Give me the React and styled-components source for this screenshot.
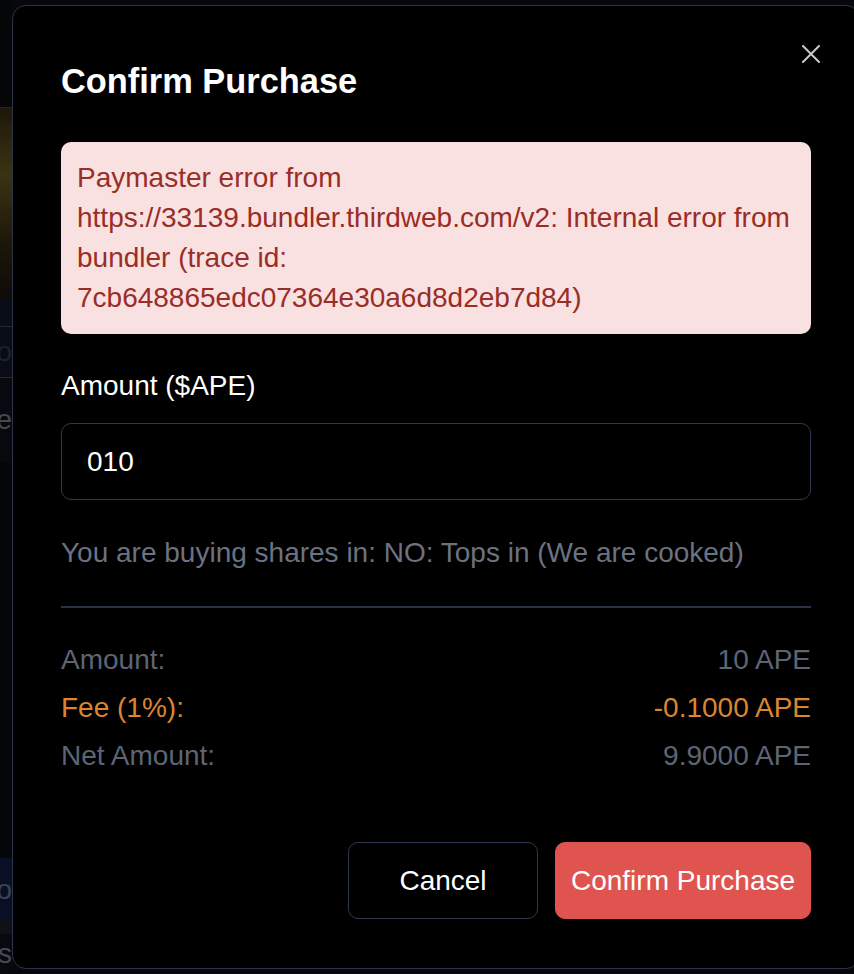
import styled, { createGlobalStyle } from 'styled-components';

const GlobalStyle = createGlobalStyle`
  html, body {
    margin: 0;
    padding: 0;
    background: #07080c;
    overflow: hidden;
  }
  body {
    font-family: "Liberation Sans", Arial, Helvetica, sans-serif;
  }
  * {
    box-sizing: border-box;
  }
`;

function CloseIcon() {
  return (
    <svg width="18" height="18" viewBox="0 0 18 18" fill="none">
      <path d="M1 1L17 17M17 1L1 17" stroke="currentColor" strokeWidth="2" strokeLinecap="round" />
    </svg>
  );
}

function App() {
  return (
    <>
      <GlobalStyle />
      <Page>
        <MarketCard>
          <CardTop />
          <CardImage />
          <CardGap />
          <CardStat>o</CardStat>
          <CardLabel>e</CardLabel>
          <CardSpacer />
          <CardFooter>o</CardFooter>
          <CardBand />
          <CardLabel $small>s</CardLabel>
        </MarketCard>
      </Page>
      <Overlay>
        <Modal>
          <CloseButton aria-label="Close">
            <CloseIcon />
          </CloseButton>
          <Title>Confirm Purchase</Title>
          <ErrorBox>
            Paymaster error from https://33139.bundler.thirdweb.com/v2: Internal error from bundler (trace id:
            7cb648865edc07364e30a6d8d2eb7d84)
          </ErrorBox>
          <Label>Amount ($APE)</Label>
          <AmountInput defaultValue="010" />
          <Hint>You are buying shares in: NO: Tops in (We are cooked)</Hint>
          <Divider />
          <Summary>
            <SummaryRow>
              <span>Amount:</span>
              <span>10 APE</span>
            </SummaryRow>
            <SummaryRow $accent>
              <span>Fee (1%):</span>
              <span>-0.1000 APE</span>
            </SummaryRow>
            <SummaryRow>
              <span>Net Amount:</span>
              <span>9.9000 APE</span>
            </SummaryRow>
          </Summary>
          <Actions>
            <ActionButton $width="190px">Cancel</ActionButton>
            <ActionButton $primary $width="256px">
              Confirm Purchase
            </ActionButton>
          </Actions>
        </Modal>
      </Overlay>
    </>
  );
}

const Page = styled.div`
  height: 974px;
  display: flex;
  background: #07080c;
`;

const MarketCard = styled.div`
  width: 300px;
  margin-left: -288px;
  display: flex;
  flex-direction: column;
  color: #3a3f4b;
  font-size: 28px;
`;

const CardTop = styled.div`
  height: 108px;
  background: #050608;
  border-bottom: 1px solid #23262e;
`;

const CardImage = styled.div`
  height: 191px;
  background: radial-gradient(ellipse at 100% 35%, #3a3412 0%, #1c160a 40%, #0d0907 75%);
`;

const CardGap = styled.div`
  height: 27px;
  background: #0a0d17;
`;

const CardStat = styled.div`
  height: 52px;
  background: #090c16;
  border-top: 1px solid #262a34;
  border-bottom: 1px solid #262a34;
  text-align: right;
  color: #1d212a;
  line-height: 50px;
`;

const CardLabel = styled.div`
  text-align: right;
  line-height: ${props => (props.$small ? '40px' : '84px')};
  background: #07090f;
  color: #444955;
`;

const CardSpacer = styled.div`
  flex: 1;
  background: #05060a;
`;

const CardFooter = styled.div`
  height: 64px;
  background: #0a1024;
  text-align: right;
  line-height: 64px;
  color: #3c4256;
`;

const CardBand = styled.div`
  height: 12px;
  background: #0f1117;
`;

const Overlay = styled.div`
  position: fixed;
  inset: 0;
  padding: 5px 0 0 12px;
`;

const Modal = styled.div`
  position: relative;
  width: 848px;
  display: flex;
  flex-direction: column;
  padding: 48px 48px 49px;
  background: #000;
  border: 1px solid #2b3349;
  border-radius: 14px;
  color: #fff;
`;

const CloseButton = styled.button`
  position: absolute;
  top: 39px;
  right: 39px;
  padding: 0;
  border: none;
  background: none;
  color: #c9c9cc;
  display: flex;
  cursor: pointer;
`;

const Title = styled.h2`
  margin: 0 0 34px;
  font-size: 34.4px;
  font-weight: 700;
  line-height: 54px;
`;

const ErrorBox = styled.div`
  padding: 16px;
  margin-bottom: 32px;
  background: #f9e1e1;
  border-radius: 10px;
  color: #992d27;
  font-size: 28px;
  line-height: 40px;
`;

const Label = styled.label`
  margin-bottom: 17px;
  font-size: 28px;
  line-height: 40px;
`;

const AmountInput = styled.input`
  height: 77px;
  padding: 0 25px;
  margin-bottom: 33px;
  background: #000;
  border: 1px solid #2f3850;
  border-radius: 10px;
  color: #fff;
  font-family: inherit;
  font-size: 28px;
  outline: none;
`;

const Hint = styled.p`
  margin: 0 0 33px;
  color: #6b7280;
  font-size: 28px;
  line-height: 40px;
`;

const Divider = styled.hr`
  margin: 0 0 32px;
  border: none;
  border-top: 2px solid #2b3349;
`;

const Summary = styled.div`
  display: flex;
  flex-direction: column;
  gap: 8px;
  margin-bottom: 66px;
`;

const SummaryRow = styled.div`
  display: flex;
  justify-content: space-between;
  font-size: 28px;
  line-height: 40px;
  color: ${props => (props.$accent ? '#dc8531' : '#5d6574')};
`;

const Actions = styled.div`
  display: flex;
  justify-content: flex-end;
  gap: 17px;
`;

const ActionButton = styled.button`
  width: ${props => props.$width};
  height: 77px;
  padding: 0;
  border-radius: 10px;
  border: 1px solid ${props => (props.$primary ? '#e0544f' : '#2f3850')};
  background: ${props => (props.$primary ? '#e0544f' : '#000')};
  color: #fff;
  font-family: inherit;
  font-size: 28px;
  cursor: pointer;
`;

export default App;
